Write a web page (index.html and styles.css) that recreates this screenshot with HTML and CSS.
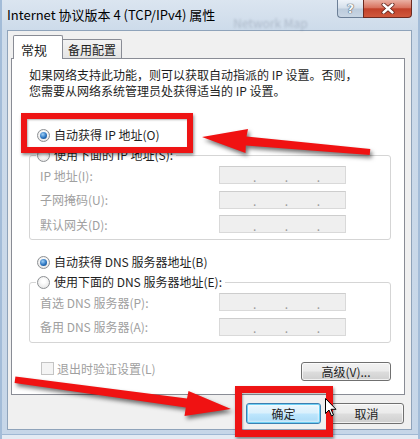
FILE: index.html
```html
<!DOCTYPE html>
<html lang="zh-CN">
<head>
    <meta charset="UTF-8">
    <meta name="viewport" content="width=device-width, initial-scale=1.0">
    <title>Internet 协议版本 4 (TCP/IPv4) 属性</title>
    <link rel="stylesheet" href="styles.css">
</head>
<body>

<div class="window">
    <div class="titlebar">
        <span class="title">Internet 协议版本 4 (TCP/IPv4) 属性</span>
        <span class="ghost">Network Map</span>
        <div class="caption-btns">
            <span class="cap-help">?</span>
            <span class="cap-close">
                <svg width="14" height="11" viewBox="0 0 14 11">
                    <path d="M2.5 1.5 L11.5 9.5 M11.5 1.5 L2.5 9.5" stroke="#5a1d14" stroke-width="4" stroke-linecap="round"/>
                    <path d="M2.5 1.5 L11.5 9.5 M11.5 1.5 L2.5 9.5" stroke="#fff" stroke-width="2.4" stroke-linecap="round"/>
                </svg>
            </span>
        </div>
    </div>

    <div class="client">
        <div class="tabs">
            <span class="tab active">常规</span>
            <span class="tab">备用配置</span>
        </div>

        <div class="panel">
            <p class="intro">如果网络支持此功能，则可以获取自动指派的 IP 设置。否则，<br>您需要从网络系统管理员处获得适当的 IP 设置。</p>

            <div class="radio-row first"><span class="radio on"></span>自动获得 IP 地址(O)</div>

            <fieldset class="group">
                <legend><span class="radio-row"><span class="radio"></span>使用下面的 IP 地址(S):</span></legend>
                <div class="field-row"><span class="label">IP 地址(I):</span><span class="ip"><i>.</i><i>.</i><i>.</i></span></div>
                <div class="field-row"><span class="label">子网掩码(U):</span><span class="ip"><i>.</i><i>.</i><i>.</i></span></div>
                <div class="field-row"><span class="label">默认网关(D):</span><span class="ip"><i>.</i><i>.</i><i>.</i></span></div>
            </fieldset>

            <div class="radio-row dns"><span class="radio on"></span>自动获得 DNS 服务器地址(B)</div>

            <fieldset class="group">
                <legend><span class="radio-row"><span class="radio"></span>使用下面的 DNS 服务器地址(E):</span></legend>
                <div class="field-row"><span class="label">首选 DNS 服务器(P):</span><span class="ip"><i>.</i><i>.</i><i>.</i></span></div>
                <div class="field-row"><span class="label">备用 DNS 服务器(A):</span><span class="ip"><i>.</i><i>.</i><i>.</i></span></div>
            </fieldset>

            <div class="bottom-row">
                <span class="check"><span class="box"></span>退出时验证设置(L)</span>
                <button class="btn">高级(V)...</button>
            </div>
        </div>

        <div class="footer">
            <button class="btn default">确定</button>
            <button class="btn">取消</button>
        </div>
    </div>

    <!-- tutorial markup drawn over the dialog -->
    <div class="mark mark-ip"></div>
    <div class="mark mark-ok"></div>
    <svg class="arrows" width="420" height="439" viewBox="0 0 420 439">
        <polygon points="202,137 248,129 246.5,136.5 370.3,149 369.7,155 245.8,145.5 245.5,153" fill="#f01212"/>
        <polygon points="231,409 188.5,391 187,398.5 15.4,376.5 14.6,383 185.8,407.5 184.5,416" fill="#f01212"/>
    </svg>
    <svg class="cursor" width="12" height="19" viewBox="0 0 12 19">
        <path d="M0.5 0.5 L0.5 15.5 L4 12 L6.5 18 L8.5 17 L6 11.3 L11 11.3 Z" fill="#fff" stroke="#000" stroke-width="1"/>
    </svg>
</div>

</body>
</html>
```

FILE: styles.css
```css
* {
    box-sizing: border-box;
}
body {
    margin: 0;
    background: #b9cde2;
    font-family: "Noto Sans CJK SC", sans-serif;
    font-size: 12px;
    color: #1e1e1e;
}
.window {
    position: relative;
    width: 420px;
    height: 439px;
    padding: 0 8px 9px 7px;
    background: linear-gradient(180deg, #dbe5f0 0%, #cddbea 30px, #c6d6e8 100%);
    box-shadow: inset 2px 0 #a3bcd8, inset -2px 0 #a3bcd8, inset 0 -4px #e4ebf3, inset 0 -5px #9fb8d4;
    overflow: hidden;
}
.titlebar {
    display: flex;
    align-items: flex-start;
    height: 30px;
}
.title {
    margin-top: 7px;
    font-size: 13px;
    line-height: 16px;
    color: #000;
    white-space: nowrap;
}
.ghost {
    margin: 14px 0 0 18px;
    font-size: 12px;
    color: rgba(50, 60, 80, 0.22);
    filter: blur(1px);
}
.caption-btns {
    display: flex;
    margin-left: auto;
}
.cap-help {
    width: 26px;
    height: 18px;
    border: 1px solid #6c7f97;
    border-top: none;
    border-right: none;
    border-radius: 0 0 0 4px;
    background: linear-gradient(180deg, #eef3f9 0%, #d5dfea 48%, #bccbdc 52%, #c9d6e4 100%);
    color: #f4f7fa;
    font: bold 13px/17px "DejaVu Sans", sans-serif;
    text-align: center;
    text-shadow: 0 0 1px #2e3a48, 0 0 1px #2e3a48;
}
.cap-close {
    display: flex;
    align-items: center;
    justify-content: center;
    width: 49px;
    height: 18px;
    border: 1px solid #6d2a20;
    border-top: none;
    border-radius: 0 0 4px 0;
    background: linear-gradient(180deg, #eab1a4 0%, #d9735f 45%, #c2412a 52%, #d0583c 100%);
}
.client {
    height: 400px;
    background: #f0f0f0;
    border: 1px solid #8fa3ba;
    padding: 4px 6px 0 3px;
}
.tabs {
    display: flex;
    align-items: flex-end;
    height: 24px;
    margin-bottom: -1px;
    padding-left: 2px;
    position: relative;
    z-index: 1;
}
.tab {
    height: 19px;
    width: 59px;
    margin-bottom: 1px;
    border: 1px solid #898c95;
    border-left: none;
    border-bottom: none;
    border-radius: 0 2px 0 0;
    background: linear-gradient(180deg, #f3f3f3, #e4e4e4);
    line-height: 16px;
    padding-top: 2px;
    text-align: center;
    color: #222;
}
.tab.active {
    height: 24px;
    width: 50px;
    margin-bottom: 0;
    border-left: 1px solid #898c95;
    border-radius: 2px 2px 0 0;
    background: #fff;
    padding: 6px 0 0 7px;
    text-align: left;
    font-size: 13px;
}
.panel {
    height: 337px;
    background: #fff;
    border: 1px solid #898c95;
    padding: 8px 13px 0 17px;
}
.intro {
    margin: 0;
    line-height: 16px;
    white-space: nowrap;
}
.radio-row {
    display: flex;
    align-items: center;
    gap: 4px;
    height: 16px;
    line-height: 16px;
    white-space: nowrap;
}
.radio-row.first {
    margin-top: 28px;
    padding-left: 8px;
}
.radio-row.dns {
    margin-top: 14px;
    padding-left: 8px;
}
.radio {
    position: relative;
    flex: none;
    width: 13px;
    height: 13px;
    border-radius: 50%;
    border: 1px solid #8d9093;
    background: radial-gradient(circle at 50% 40%, #fff 20%, #dedede 100%);
}
.radio.on::after {
    content: "";
    position: absolute;
    left: 2px;
    top: 2px;
    width: 7px;
    height: 7px;
    border-radius: 50%;
    background: radial-gradient(circle at 40% 35%, #9fd0f7 0%, #2a74c0 55%, #0e3b70 100%);
}
.group {
    margin: 4px 0 0;
    padding: 3px 0 6px 0;
    border: 1px solid #d5d5d5;
    border-radius: 3px;
    min-width: 0;
}
.group legend {
    margin-left: 6px;
    padding: 0 3px 0 1px;
}
.group + .radio-row,
.field-row + .field-row {
    margin-top: 6.5px;
}
.group + .radio-row.dns {
    margin-top: 14px;
}
.field-row {
    display: flex;
    align-items: center;
    height: 18px;
    padding-left: 10px;
    color: #a0a0a0;
}
.label {
    width: 179px;
    white-space: nowrap;
}
.ip {
    display: flex;
    justify-content: space-between;
    align-items: center;
    width: 127px;
    height: 18px;
    padding: 2px 25px 0 33px;
    background: #efefef;
    border: 1px solid #d9d9d9;
    border-top-color: #cdcdcd;
}
.ip i {
    font-style: normal;
    color: #9a9a9a;
}
.bottom-row {
    display: flex;
    justify-content: space-between;
    align-items: flex-start;
    margin-top: 19px;
    padding-left: 12px;
}
.check {
    display: flex;
    align-items: center;
    gap: 3px;
    height: 13px;
    line-height: 13px;
    color: #a0a0a0;
}
.box {
    width: 13px;
    height: 13px;
    border: 1px solid #c4c4c4;
    background: #f4f4f4;
}
.btn {
    width: 90px;
    height: 19px;
    padding: 0;
    border: 1px solid #707070;
    border-radius: 3px;
    background: linear-gradient(180deg, #f2f2f2 0%, #ebebeb 48%, #dddddd 52%, #cfcfcf 100%);
    font-family: "Noto Sans CJK SC", sans-serif;
    font-size: 12px;
    color: #1e1e1e;
    box-shadow: inset 0 0 0 1px rgba(255, 255, 255, 0.7);
}
.footer {
    display: flex;
    justify-content: flex-end;
    gap: 8px;
    margin-top: 8px;
    padding-right: 1px;
}
.footer .btn {
    width: 75px;
    height: 21px;
}
.btn.default {
    border-color: #3c7fb1;
    background: linear-gradient(180deg, #eaf6fd 0%, #d9f0fc 48%, #bee6fd 52%, #a7d9f5 100%);
    box-shadow: inset 0 0 0 1px #6fd0f4, inset 0 0 2px 2px rgba(255, 255, 255, 0.5);
}
.mark {
    position: absolute;
    border-style: solid;
    border-color: #ee1414;
    box-shadow: 1px 2px 3px rgba(0, 0, 0, 0.45), inset 1px 1px 2px rgba(0, 0, 0, 0.3);
}
.mark-ip {
    left: 21px;
    top: 113px;
    width: 172px;
    height: 40px;
    border-width: 6px;
}
.mark-ok {
    left: 235px;
    top: 386px;
    width: 98px;
    height: 51px;
    border-width: 7px;
}
.arrows {
    position: absolute;
    left: 0;
    top: 0;
    pointer-events: none;
    filter: drop-shadow(2px 3px 2px rgba(0, 0, 0, 0.55));
}
.cursor {
    position: absolute;
    left: 325px;
    top: 398px;
}
```
